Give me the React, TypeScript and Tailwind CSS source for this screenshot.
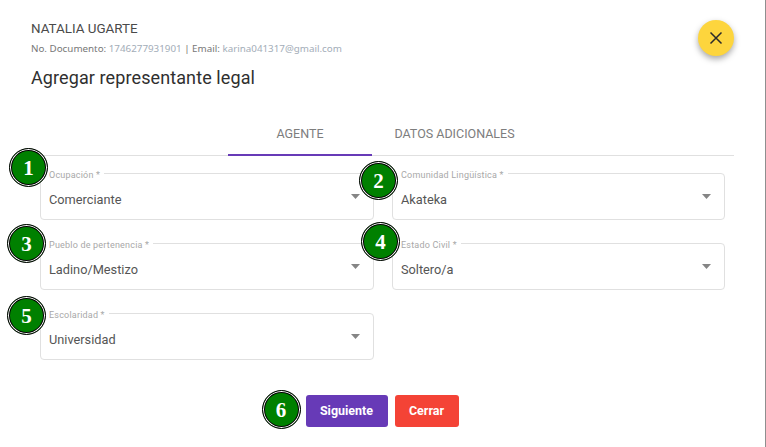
const ROBOTO = "font-['Roboto',sans-serif]";

function Badge({ n, className }: { n: number; className: string }) {
  return (
    <div className={`absolute flex h-[39px] w-[39px] items-center justify-center rounded-full border border-black bg-[#008000] pt-[1px] font-['Liberation_Serif',serif] text-[21px] font-bold leading-none text-white shadow-[inset_0_0_0_1px_#fff,inset_0_0_0_2px_#000] ${className}`}>
      {n}
    </div>
  );
}

function Field({ label, value, badge, badgeClass }: { label: string; value: string; badge: number; badgeClass: string }) {
  return (
    <div className="relative h-[47px] rounded border border-[#e0e0e0]">
      <span className="absolute left-[4px] top-[-4px] bg-white px-[4px] text-[9px] leading-[11px] tracking-[0.2px] text-[#a8a8a8]">{label}</span>
      <span className="absolute left-[8px] top-[17px] text-[12.75px] leading-[18px] text-[#555]">{value}</span>
      <svg className="absolute right-[13px] top-[20px] h-[5px] w-[9px]" viewBox="0 0 9 5">
        <path d="M0 0h9L4.5 5z" fill="#858585" />
      </svg>
      <Badge n={badge} className={badgeClass} />
    </div>
  );
}

export default function App() {
  return (
    <div className={`relative flex h-[447px] w-[766px] flex-col border-r border-[#8f8f8f] bg-white ${ROBOTO}`}>
      <header className="pl-[31px] pt-[20px]">
        <div className="text-[13.4px] leading-[17px] text-[#4a4a4a]">NATALIA UGARTE</div>
        <div className="mt-[5px] font-['Noto_Sans',sans-serif] text-[9.8px] leading-[14px] text-[#777]">
          No. Documento: <span className="text-[#a3adb8]">1746277931901</span> | Email: <span className="text-[#a3adb8]">karina041317@gmail.com</span>
        </div>
        <h1 className="mt-[11px] text-[18px] leading-[22px] tracking-[0.1px] text-[#2f2f2f]">Agregar representante legal</h1>
      </header>

      <button className="absolute left-[698px] top-[20px] flex h-[36px] w-[36px] items-center justify-center rounded-full bg-[#fdd53d] shadow-[0_3px_6px_rgba(0,0,0,0.35)]" aria-label="Cerrar">
        <svg width="14" height="14" viewBox="0 0 14 14" fill="none" stroke="#2b2b2b" strokeWidth="1.5"><path d="M1.5 1.5l11 11M12.5 1.5l-11 11" /></svg>
      </button>

      <nav className="ml-[40px] mr-[31px] mt-[25px] flex h-[42px] border-b border-[#e0e0e0] pl-[188px] text-[12.5px] font-normal text-[#7d7d7d]">
        <div className="-mb-px flex w-[144px] items-center justify-center border-b-2 border-[#673ab7]">AGENTE</div>
        <div className="flex w-[165px] items-center justify-center">DATOS ADICIONALES</div>
      </nav>

      <main className="ml-[40px] mt-[17px] grid w-[685px] grid-cols-[334px_333px] gap-x-[18px] gap-y-[23px]">
        <Field label="Ocupación *" value="Comerciante" badge={1} badgeClass="left-[-32px] top-[-26px]" />
        <Field label="Comunidad Lingüística *" value="Akateka" badge={2} badgeClass="left-[-34px] top-[-13px]" />
        <Field label="Pueblo de pertenencia *" value="Ladino/Mestizo" badge={3} badgeClass="left-[-34px] top-[-20px]" />
        <Field label="Estado Civil *" value="Soltero/a" badge={4} badgeClass="left-[-32px] top-[-22px]" />
        <Field label="Escolaridad *" value="Universidad" badge={5} badgeClass="left-[-34px] top-[-18px]" />
      </main>

      <footer className="relative mt-[35px] flex justify-center gap-[7px] pr-[1px] text-[12.5px] font-bold text-white">
        <div className="relative">
          <Badge n={6} className="left-[-44px] top-[-5px]" />
          <button className="h-[32px] w-[82px] rounded-[3px] bg-[#673ab7]">Siguiente</button>
        </div>
        <button className="h-[32px] w-[64px] rounded-[3px] bg-[#f44336]">Cerrar</button>
      </footer>
    </div>
  );
}
